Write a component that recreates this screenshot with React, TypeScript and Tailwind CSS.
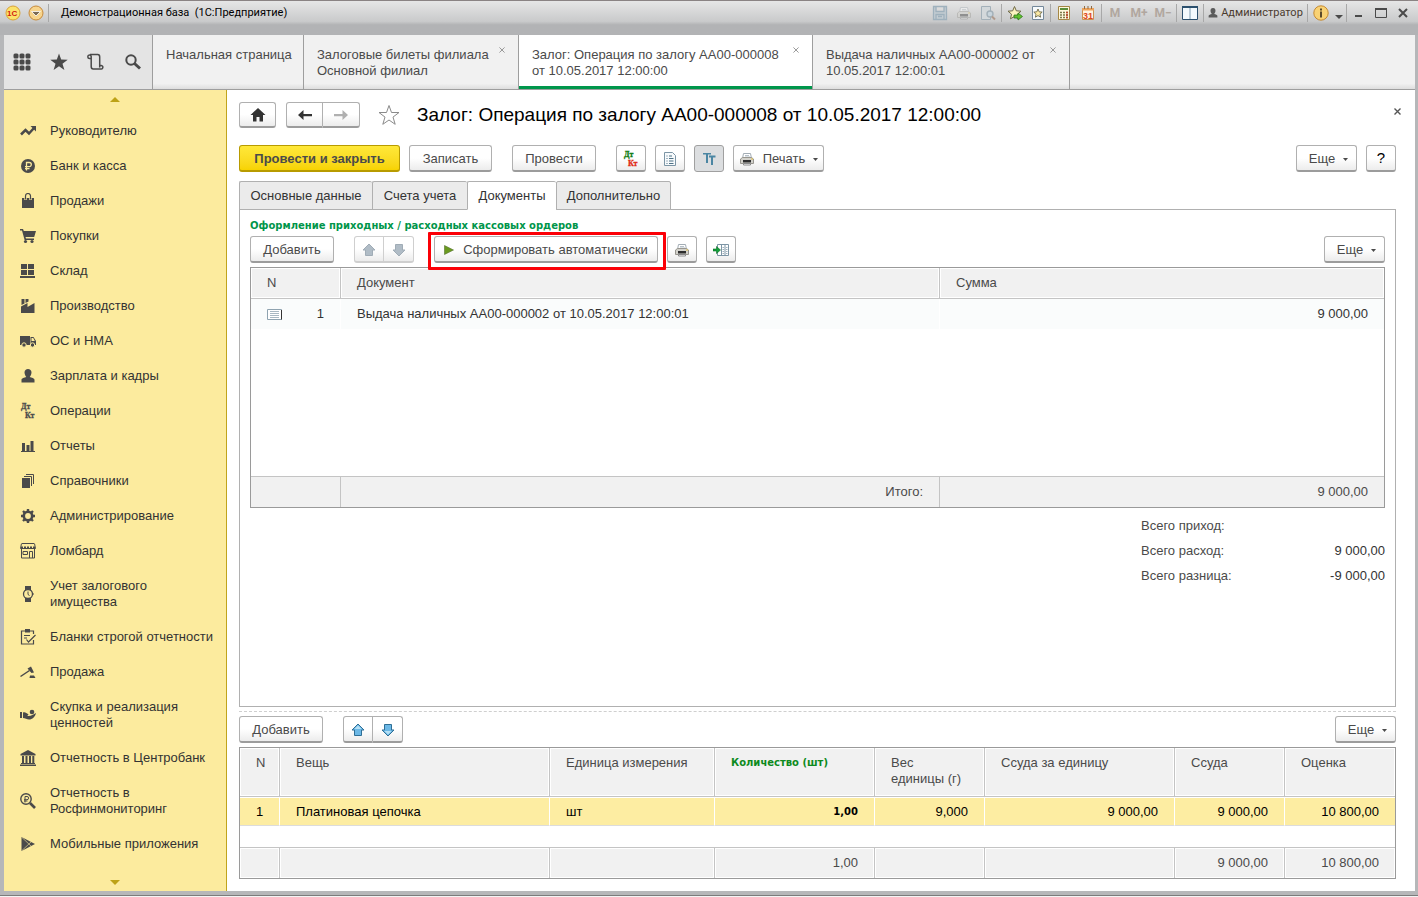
import type { ReactNode } from 'react'
import clsx from 'clsx'

/* ---------- icons ---------- */

function Svg({ children, size = 16, className }: { children: ReactNode; size?: number; className?: string }) {
  return (
    <svg width={size} height={size} viewBox={`0 0 ${size} ${size}`} fill="currentColor" className={clsx('shrink-0', className)} aria-hidden="true">
      {children}
    </svg>
  )
}

function DtKt({ top = '#4a4a4a', bottom = '#4a4a4a' }: { top?: string; bottom?: string }) {
  return (
    <Svg className="overflow-visible">
      <g fontFamily="'Liberation Serif', serif" fontWeight="bold" fontSize="8" strokeWidth=".3">
        <text x="1" y="6" fill={top} stroke={top}>Дт</text>
        <text x="5" y="15" fill={bottom} stroke={bottom}>Кт</text>
      </g>
    </Svg>
  )
}

function Printer({ muted }: { muted?: boolean }) {
  return (
    <Svg className={muted ? 'opacity-40' : ''}>
      <path d="M4.500 2.500h7l1 5h-9z" fill="#fff" stroke="#a3adb5" />
      <path d="M6 4.500h4M6 6h5" stroke="#b6c0c8" />
      <path d="M1.500 8l2-1.500h9l2 1.500v4.500h-13z" fill="#d2d1cb" stroke="#98968f" />
      <path d="M4 9h8v2.500H4z" fill="#2d2d2d" />
      <path d="M4.500 12.500h7v1.500h-7z" fill="#fff" stroke="#8a8a8a" />
      <path d="M12 8h2" stroke="#e6c34a" />
    </Svg>
  )
}

function BlueArrow({ down, muted }: { down?: boolean; muted?: boolean }) {
  return (
    <Svg className={down ? 'rotate-180' : ''}>
      <path
        d="M8 2L14 8H11.500V13.500H4.500V8H2z"
        fill={muted ? '#b0bcc6' : '#6cb8e6'}
        stroke={muted ? '#a0acb6' : '#2f6f96'}
        strokeLinejoin="round"
      />
      {!muted && <path d="M8 3.500l3.500 3.500H4.500z" fill="#b5e0f5" />}
    </Svg>
  )
}

function Caret() {
  return (
    <svg width="5" height="3" viewBox="0 0 5 3" className="mt-px shrink-0" fill="#4a4a4a" aria-hidden="true">
      <path d="M0 0h5L2.500 3z" />
    </svg>
  )
}

function Cross({ size = 7, weight = 1 }: { size?: number; weight?: number }) {
  return (
    <svg width={size} height={size} viewBox="0 0 7 7" stroke="currentColor" strokeWidth={weight} fill="none" aria-hidden="true">
      <path d="M.5.5l6 6M6.500.5l-6 6" />
    </svg>
  )
}

const sections: { label: string; icon: ReactNode }[] = [
  {
    label: 'Руководителю',
    icon: <Svg><path d="M1 11.500L5.500 7L9 10.500L14 5" fill="none" stroke="currentColor" strokeWidth="2.500" /><path d="M10.500 3H16v5.500z" /></Svg>,
  },
  {
    label: 'Банк и касса',
    icon: (
      <Svg>
        <circle cx="8" cy="8" r="7" />
        <path d="M6.500 12.500V4.500h2.700a2 2 0 0 1 0 4.200H5M5 10.700h4.500" fill="none" stroke="#fceb9e" strokeWidth="1.300" />
      </Svg>
    ),
  },
  {
    label: 'Продажи',
    icon: <Svg><path d="M2 5h12v10H2z" /><path d="M5.500 7V3.500a2.500 2.500 0 0 1 5 0V7" fill="none" stroke="#fceb9e" strokeWidth="2.400" /><path d="M5.500 6.500V3a2.500 2.500 0 0 1 5 0v3.500" fill="none" stroke="currentColor" strokeWidth="1.200" /></Svg>,
  },
  {
    label: 'Покупки',
    icon: <Svg><path d="M0 1h3l.8 2H16l-1.800 6H5.500l.5 1.500h8V12H4.600L2 2.500H0z" /><circle cx="5.500" cy="13.500" r="1.600" /><circle cx="12" cy="13.500" r="1.600" /></Svg>,
  },
  {
    label: 'Склад',
    icon: <Svg><path d="M1 1h6v5H1zM8 1h6v5H8zM1 7h6v5H1zM8 7h6v5H8zM0 13h15v2H0z" /></Svg>,
  },
  {
    label: 'Производство',
    icon: <Svg><path d="M1 15V8.500L7.500 5v4l7-4v10zM1.500 1h3v4.500L1.500 7zM5.500 1h3v2.500l-3 1.500z" /></Svg>,
  },
  {
    label: 'ОС и НМА',
    icon: <Svg><path d="M0 3h10v9H0zM10.500 4h3l2.500 4v4h-5.500z" /><path d="M11.500 5h1.700l1.600 3h-3.300z" fill="#fceb9e" /><g stroke="#fceb9e"><circle cx="4" cy="12" r="2.200" /><circle cx="12.500" cy="12" r="2.200" /></g></Svg>,
  },
  {
    label: 'Зарплата и кадры',
    icon: <Svg><path d="M8 1c2 0 3.500 1.200 3.500 3.500S10 8.500 9.700 9c2 .8 4.800 1 4.800 3v2.500h-13V12c0-2 2.800-2.200 4.800-3-.3-.5-1.800-2.200-1.800-4.500S6 1 8 1z" /></Svg>,
  },
  { label: 'Операции', icon: <DtKt /> },
  {
    label: 'Отчеты',
    icon: <Svg><path d="M1 13h14v1H1zM2 5h3v8H2zM6.500 7h3v6h-3zM10.500 3h3v10h-3z" /></Svg>,
  },
  {
    label: 'Справочники',
    icon: <Svg><path d="M2 5h8v10H2z" /><path d="M4 3.500h7.500V13M6 1.500h7.500V11" fill="none" stroke="currentColor" /></Svg>,
  },
  {
    label: 'Администрирование',
    icon: (
      <Svg>
        <circle cx="8" cy="8" r="4.200" fill="none" stroke="currentColor" strokeWidth="2.600" />
        <path d="M8 1v3M8 12v3M1 8h3M12 8h3M3 3l2 2M11 11l2 2M13 3l-2 2M5 11l-2 2" stroke="currentColor" strokeWidth="2.400" />
      </Svg>
    ),
  },
  {
    label: 'Ломбард',
    icon: (
      <Svg>
        <g fill="none" stroke="currentColor">
          <path d="M1.500 6v9h13V6M2 .5h12M1.500.5L.5 5.500h15l-1-5M9.500 15V8.500h3V15M3 8.500h4.500v3H3z" />
          <path d="M1 4.500h14" strokeDasharray="2 1" strokeWidth="2" />
        </g>
      </Svg>
    ),
  },
  {
    label: 'Учет залогового имущества',
    icon: (
      <Svg>
        <path d="M5 0h6v4H5zM5 12h6v4H5z" />
        <circle cx="8" cy="8" r="4.500" fill="#fceb9e" stroke="currentColor" strokeWidth="1.300" />
        <path d="M8 5.500V8.500l1.500 1M13 8h1" fill="none" stroke="currentColor" />
      </Svg>
    ),
  },
  {
    label: 'Бланки строгой отчетности',
    icon: (
      <Svg>
        <path d="M13.500 5V2h-12v13h12v-4M4 6.500h6M4 9h3M6.500 10.500l2 2.500L15.500 6" fill="none" stroke="currentColor" strokeWidth="1.200" />
        <path d="M5 0h5v3.500H5z" />
      </Svg>
    ),
  },
  {
    label: 'Продажа',
    icon: <Svg><path d="M.5 12.500L9.500 6.500" stroke="currentColor" strokeWidth="1.500" /><path d="M7.500 4.500L11 2.500l3 6-2.500.5zM10 11.500h4l1.500 2.500h-6z" /></Svg>,
  },
  {
    label: 'Скупка и реализация ценностей',
    icon: <Svg><path d="M0 5h2v6H0zM3 5.500c2-1 3.500.5 5 1.500 1 .8 0 1.500-1 1.500 2 1.500 6-.5 9-2.500-1 4-3.500 6.500-7 6.500-2 0-4-1.500-6-1.500z" /><circle cx="12" cy="5" r="2.300" /></Svg>,
  },
  {
    label: 'Отчетность в Центробанк',
    icon: <Svg><path d="M8 0l7.500 4v1.500H.5V4zM1 13h14v1H1zM0 14.500h16V16H0zM2 6h2v7H2zM5.500 6h2v7h-2zM9 6h2v7H9zM12.300 6h2v7h-2z" /></Svg>,
  },
  {
    label: 'Отчетность в Росфинмониторинг',
    icon: (
      <Svg>
        <g fill="none" stroke="currentColor">
          <circle cx="6" cy="6" r="5.200" strokeWidth="1.400" />
          <path d="M5 9.500v-6h2a1.500 1.500 0 0 1 0 3.200H4M4 8h3.500" />
          <path d="M10 10l5 5" strokeWidth="2.600" />
        </g>
      </Svg>
    ),
  },
  {
    label: 'Мобильные приложения',
    icon: <Svg><path d="M1.500 1L15 8 1.500 15z" /><path d="M2 1.500l9 8.500M2 14.500L11 6" stroke="#fceb9e" strokeWidth=".6" /></Svg>,
  },
]

/* ---------- controls ---------- */

interface ButtonProps {
  children: ReactNode
  className?: string
  label?: string
  disabled?: boolean
}

function Button({ children, className, label, disabled }: ButtonProps) {
  return (
    <button
      type="button"
      aria-label={label}
      disabled={disabled}
      className={clsx(
        'flex shrink-0 items-center justify-center rounded-[3px] border border-b-2 bg-linear-to-b from-white from-50% to-[#ececec] pt-px',
        disabled ? 'border-[#cfcfcf]' : 'border-[#b0b0b0] border-b-[#9c9c9c]',
        className ?? 'h-[27px] w-[30px]'
      )}
    >
      {children}
    </button>
  )
}

function MoreButton() {
  return (
    <Button className="h-[27px] w-[61px] gap-2 pl-1">
      Еще <Caret />
    </Button>
  )
}

function ArrowPair({ muted }: { muted?: boolean }) {
  return (
    <div className="flex">
      <Button className="h-[27px] w-[30px] rounded-r-none" label="Переместить вверх" disabled={muted}>
        <BlueArrow muted={muted} />
      </Button>
      <Button className="h-[27px] w-[30px] rounded-l-none border-l-0" label="Переместить вниз" disabled={muted}>
        <BlueArrow down muted={muted} />
      </Button>
    </div>
  )
}

/* ---------- window title ---------- */

function Divider() {
  return <span className="mx-px mt-[3px] h-[18px] w-px shrink-0 bg-[#a8a8a8]" />
}

function BarButton({ label, className = 'w-6', children }: { label: string; className?: string; children: ReactNode }) {
  return (
    <button type="button" aria-label={label} className={clsx('flex h-6 shrink-0 items-center justify-center', className)}>
      {children}
    </button>
  )
}

function TitleBar() {
  return (
    <header className="flex h-[35px] shrink-0 items-start border-t border-[#8a8383] bg-linear-to-b from-[#e6e6e6] via-[#c9cacb] via-60% to-[#b2b3b5] to-70% pr-1 pl-px font-['Roboto','Noto_Sans',sans-serif] text-[11px] text-black">
      <BarButton label="1С:Предприятие">
        <Svg>
          <circle cx="8" cy="8" r="7" fill="#fbe36a" stroke="#d9a23a" />
          <text x="2" y="11" fontSize="8" fontWeight="bold" fill="#d2200f" fontFamily="'Liberation Sans', sans-serif">1С</text>
        </Svg>
      </BarButton>
      <BarButton label="Главное меню" className="w-[22px]">
        <Svg>
          <circle cx="8" cy="8" r="7" fill="#f7d48c" stroke="#c68a3c" />
          <path d="M3.500 6.500h9L8 11z" fill="#7b6a54" stroke="#fff" strokeWidth=".8" />
        </Svg>
      </BarButton>
      <Divider />
      <h1 className="pl-[11px] leading-6 whitespace-pre">Демонстрационная база  (1С:Предприятие)</h1>
      <div className="ml-auto flex text-[#b1a79f]">
        <BarButton label="Сохранить">
          <Svg className="text-[#9fb1bd]"><path d="M1.500 1.500h13v13h-13zM4 1.500v5h8v-5M4 14V9.500h8V14M6 11.500h4" fill="#c3ccd2" stroke="currentColor" strokeWidth="1.300" /></Svg>
        </BarButton>
        <BarButton label="Печать"><Printer muted /></BarButton>
        <BarButton label="Просмотр">
          <Svg className="text-[#a3b0b9]">
            <path d="M1.500 1.500h9v13h-9z" fill="#d3d8db" stroke="currentColor" />
            <circle cx="10" cy="9" r="3" fill="#c8d4dc" stroke="currentColor" strokeWidth="1.400" />
            <path d="M12 11.500l3 3" stroke="#b09a8c" strokeWidth="2" />
          </Svg>
        </BarButton>
        <Divider />
        <BarButton label="Добавить в избранное">
          <Svg>
            <path d="M7.500 1.500l1.800 4.300 4.700.4-3.500 3 1 4.600-4-2.400-4 2.400 1-4.600-3.500-3 4.700-.4z" fill="#fdf3c0" stroke="#6f6a48" />
            <path d="M7 10h4V8l4.500 3.500L11 15v-2H7z" fill="#62c12f" stroke="#2d7a1c" strokeWidth=".8" />
          </Svg>
        </BarButton>
        <BarButton label="Избранное" className="w-[22px]">
          <Svg>
            <path d="M2.500 1.500h11v13h-11z" fill="#f7fafc" stroke="#74889a" />
            <path d="M8 4l1.200 2.800 3 .3L10 9.200l.6 3L8 10.600l-2.600 1.600.6-3-2.200-2.100 3-.3z" fill="#fbe9a4" stroke="#5d5a3c" strokeWidth=".8" />
          </Svg>
        </BarButton>
        <Divider />
        <BarButton label="Калькулятор">
          <Svg>
            <path d="M2.500 1.500h11v13h-11z" fill="#fff8dc" stroke="#a58745" />
            <path d="M4 3h8v2H4z" fill="#5a8f3a" />
            <path d="M4 7.500h8M4 10h8M4 12.500h8" stroke="#7d7a4a" strokeWidth="1.400" strokeDasharray="2 1" />
            <path d="M10 7.500h2M10 10h2M10 12.500h2" stroke="#c0452c" strokeWidth="1.400" />
          </Svg>
        </BarButton>
        <BarButton label="Календарь">
          <Svg>
            <path d="M2.500 3.500h11v11h-11z" fill="#fff4df" stroke="#c99355" />
            <path d="M2 3h12v2.500H2z" fill="#eea35a" />
            <path d="M4.500 1v3M8 1v3M11.500 1v3" stroke="#8f6b45" />
            <text x="3" y="13.500" fontSize="9" fontWeight="bold" fill="#e0481c" fontFamily="'Liberation Sans', sans-serif">31</text>
          </Svg>
        </BarButton>
        <Divider />
        <BarButton label="Поместить в память"><b className="text-xs">M</b></BarButton>
        <BarButton label="Прибавить к памяти"><b className="text-xs">M+</b></BarButton>
        <BarButton label="Вычесть из памяти"><b className="text-xs">M−</b></BarButton>
        <Divider />
        <BarButton label="Разделить окно">
          <Svg><path d="M.5 1.500h15v13H.5z" fill="#f3f9fd" stroke="#2c506e" /><path d="M0 1h16v2H0z" fill="#2c506e" /><path d="M8 3v11" stroke="#7f9bb0" /></Svg>
        </BarButton>
        <Divider />
        <button type="button" className="flex h-6 w-[101px] shrink-0 items-center justify-center gap-[3px] text-[#4a3a2e]">
          <svg width="10" height="10" viewBox="0 0 16 16" fill="#5b5b5b" className="shrink-0" aria-hidden="true">
            <path d="M8 0c3 0 4 2 4 4.500S10.500 8.500 10 9.500c2 .8 5 1 5 3V15H1v-2.500c0-2 3-2.200 5-3-.5-1-2-2.500-2-5S5 0 8 0z" />
          </svg>
          Администратор
        </button>
        <Divider />
        <BarButton label="О программе">
          <Svg>
            <circle cx="8" cy="8" r="7.200" fill="#f9d274" stroke="#c58a32" />
            <path d="M7 3.500h2v2H7zM7 6.500h2v6H7z" fill="#5b4a2a" />
          </Svg>
        </BarButton>
        <BarButton label="Ещё" className="w-3 pt-2">
          <svg width="8" height="4" viewBox="0 0 8 4" fill="#4a4a4a" aria-hidden="true"><path d="M0 0h8L4 4z" /></svg>
        </BarButton>
        <Divider />
        <BarButton label="Свернуть" className="w-[22px]"><Svg size={12}><path d="M2 8h7v2H2z" fill="#4a4a4a" /></Svg></BarButton>
        <BarButton label="Развернуть" className="w-[22px]"><Svg size={12}><path d="M.5 1.500h11v9H.5z" fill="none" stroke="#4a4a4a" /><path d="M0 1h12v2H0z" fill="#4a4a4a" /></Svg></BarButton>
        <BarButton label="Закрыть окно" className="w-[22px]"><Svg size={12}><path d="M2 2l8 8M10 2l-8 8" stroke="#4a4a4a" strokeWidth="2" /></Svg></BarButton>
      </div>
    </header>
  )
}

/* ---------- open windows ---------- */

const windows = [
  { label: 'Начальная страница', width: 'w-[151px]', fixed: true },
  { label: 'Залоговые билеты филиала Основной филиал', width: 'w-[215px]' },
  { label: 'Залог: Операция по залогу AA00-000008 от 10.05.2017 12:00:00', width: 'w-[294px]', active: true },
  { label: 'Выдача наличных AA00-000002 от 10.05.2017 12:00:01', width: 'w-[257px]' },
]

function WindowTabs() {
  return (
    <div className="flex h-[55px] shrink-0 border-b border-[#9e9e9e] bg-[#f1f1f1] text-[#4a4a4a]">
      <div className="flex w-[148px] shrink-0 items-center justify-between bg-[#e4e4e4] pr-[10px] pl-[9px]">
        <button type="button" aria-label="Разделы">
          <Svg size={18}>
            {[3, 9, 15].map((y) => [3, 9, 15].map((x) => <rect key={`${x}-${y}`} x={x - 2.5} y={y - 2.5} width="5" height="5" rx="1.500" />))}
          </Svg>
        </button>
        <button type="button" aria-label="Избранное">
          <Svg size={18}><path d="M9 .5l2.200 6.100 6.500.2-5.200 3.900 1.900 6.200L9 13.200l-5.400 3.700 1.900-6.200L.3 6.800l6.500-.2z" /></Svg>
        </button>
        <button type="button" aria-label="История">
          <Svg size={18}><path d="M4.500 5.500h-2a1.700 1.700 0 1 1 1.700-2V13.500c0 2 1 2.500 2 2.500h8a1.800 1.800 0 1 0-1.500-3V4c0-1.500-.8-2.500-2-2.500H3M12.700 13v1.500" fill="none" stroke="currentColor" strokeWidth="1.500" /></Svg>
        </button>
        <button type="button" aria-label="Поиск">
          <Svg size={18}><circle cx="7" cy="7" r="4.700" fill="none" stroke="currentColor" strokeWidth="2" /><path d="M10.500 10.500l5.500 5" stroke="currentColor" strokeWidth="3" /></Svg>
        </button>
      </div>
      {windows.map((w) => (
        <div
          key={w.label}
          className={clsx(
            'flex shrink-0 items-start border-l border-[#9e9e9e] pt-3 pl-[13px]',
            w.width,
            w.active ? 'bg-white shadow-[inset_0_-3px_0_#00964b]' : 'bg-linear-to-b from-[#f1f1f1] from-90% to-[#dedede]'
          )}
        >
          <a href="#" className="flex-1 leading-4">{w.label}</a>
          {!w.fixed && (
            <button type="button" aria-label="Закрыть" className="mr-3 w-[7px] shrink-0 text-[#8a8a8a]">
              <Cross size={6} />
            </button>
          )}
        </div>
      ))}
      <div className="flex-1 border-l border-[#9e9e9e] bg-linear-to-b from-[#f1f1f1] from-90% to-[#dedede]" />
    </div>
  )
}

function Sidebar() {
  return (
    <aside className="flex w-[223px] shrink-0 flex-col border-r border-[#c0a41c] bg-[#fceb9e]">
      <button type="button" aria-label="Прокрутить вверх" className="flex h-[18px] items-center justify-center text-[#bda216]">
        <svg width="10" height="5" viewBox="0 0 10 5" fill="currentColor" aria-hidden="true"><path d="M0 5h10L5 0z" /></svg>
      </button>
      <nav className="flex flex-col gap-[19px] pt-[15px] pr-3 pl-4">
        {sections.map((s) => (
          <a key={s.label} href="#" className="flex items-center gap-[14px] leading-4 text-[#333]">
            <span className="text-[#4a4a4a]">{s.icon}</span>
            <span>{s.label}</span>
          </a>
        ))}
      </nav>
      <button type="button" aria-label="Прокрутить вниз" className="mt-auto flex h-[18px] items-center justify-center text-[#bda216]">
        <svg width="10" height="5" viewBox="0 0 10 5" fill="currentColor" aria-hidden="true"><path d="M0 0h10L5 5z" /></svg>
      </button>
    </aside>
  )
}

/* ---------- form ---------- */

function FormHeader() {
  return (
    <div className="flex items-start">
      <Button className="h-[26px] w-[37px]" label="Домой">
        <Svg className="text-[#333]"><path d="M8 1l7.500 7H13v6.500H9.500V10h-3v4.500H3V8H.5z" /></Svg>
      </Button>
      <div className="ml-[10px] flex">
        <Button className="h-[26px] w-[37px] rounded-r-none" label="Назад">
          <Svg className="text-[#333]"><path d="M1 8l5.500-5v4H15v2.200H6.500V13z" /></Svg>
        </Button>
        <Button className="h-[26px] w-[37px] rounded-l-none border-l-0" label="Вперед">
          <Svg className="text-[#b0b0b0]"><path d="M15 8L9.500 3v4H1v2.200h8.500V13z" /></Svg>
        </Button>
      </div>
      <button type="button" aria-label="В избранное" className="ml-[18px] pt-[2px] text-[#8a8a8a]">
        <Svg size={22}><path d="M11 1.500l2.500 7h7.500l-6 4.600 2.200 7.200L11 16l-6.200 4.300L7 13.100 1 8.500h7.500z" fill="#fff" stroke="currentColor" /></Svg>
      </button>
      <h2 className="ml-[17px] text-[19px] leading-[26px] text-black">Залог: Операция по залогу AA00-000008 от 10.05.2017 12:00:00</h2>
      <button type="button" aria-label="Закрыть" className="mt-[6px] -mr-[5px] ml-auto text-[#555]">
        <Cross weight={1.4} />
      </button>
    </div>
  )
}

function CommandBar() {
  return (
    <div className="mt-[17px] flex">
      <button
        type="button"
        className="h-[27px] w-[161px] rounded-[3px] border border-b-2 border-[#b89b00] bg-linear-to-b from-[#ffe838] to-[#f7d300] pt-px font-bold text-[#4a4a4a]"
      >
        Провести и закрыть
      </button>
      <Button className="ml-[9px] h-[27px] w-[83px]">Записать</Button>
      <Button className="ml-5 h-[27px] w-[84px]">Провести</Button>
      <div className="ml-5 flex gap-[9px]">
        <Button label="Проводки"><DtKt top="#0d7a0d" bottom="#e02a12" /></Button>
        <Button label="Структура подчиненности">
          <Svg>
            <path d="M2.500 1.500h8l3 3v10h-11z" fill="#f7fafc" stroke="#7c95a5" />
            <path d="M4.500 5h1M4.500 7.500h1M4.500 10h1M4.500 12.500h1M7 5h3M7 7.500h4.500M7 10h4.500M7 12.500h4.500" stroke="#4f7286" />
          </Svg>
        </Button>
        <button type="button" aria-label="Учетные данные" aria-pressed="true" className="flex h-[27px] w-[30px] items-center justify-center rounded-[3px] border border-[#a0a0a0] bg-[#dcdee0]">
          <Svg className="text-[#4b86a3]"><path d="M2 2h8v1.500H7V12H5V3.500H2zM8 4.500h6.500v2H12V14h-2V6.500H8z" /></Svg>
        </button>
        <Button className="h-[27px] w-[91px] gap-2">
          <Printer />
          <span>Печать</span>
          <Caret />
        </Button>
      </div>
      <div className="ml-auto flex gap-[9px]">
        <MoreButton />
        <Button className="h-[27px] w-[30px] text-[15px] text-black" label="Справка">?</Button>
      </div>
    </div>
  )
}

const tabs = [
  { label: 'Основные данные', width: 'w-[133px]' },
  { label: 'Счета учета', width: 'w-[95px]' },
  { label: 'Документы', width: 'w-[89px]', active: true },
  { label: 'Дополнительно', width: 'w-[115px]' },
]

function FormTabs() {
  return (
    <div role="tablist" className="relative -mb-px mt-[9px] flex">
      {tabs.map((t, i) => (
        <button
          key={t.label}
          type="button"
          role="tab"
          aria-selected={!!t.active}
          className={clsx(
            'h-[29px] shrink-0 rounded-t-[2px] border border-[#b0b0b0] text-[#333]',
            t.width,
            i < tabs.length - 1 && 'border-r-0',
            t.active ? 'border-b-white bg-white' : 'bg-[#ebebeb]'
          )}
        >
          {t.label}
        </button>
      ))}
    </div>
  )
}

function DocumentsTable() {
  const head = 'h-[31px] border-b border-[#c4c4c4] bg-[#f1f1f1] px-4 text-left font-normal shadow-[inset_0_0_0_1px_#fff]'
  const foot = 'h-[31px] border-t border-[#c4c4c4] bg-[#f1f1f1] px-4 text-right'
  return (
    <table className="mt-1 w-full table-fixed border-separate border-spacing-0 border border-[#9a9a9a] text-[#4a4a4a]">
      <colgroup>
        <col className="w-[89px]" />
        <col />
        <col className="w-[445px]" />
      </colgroup>
      <thead>
        <tr>
          <th className={head}>N</th>
          <th className={clsx(head, 'border-l')}>Документ</th>
          <th className={clsx(head, 'border-l')}>Сумма</th>
        </tr>
      </thead>
      <tbody>
        <tr className="bg-[#fafcfc] text-[#333]">
          <td className="h-[30px] px-4">
            <div className="flex items-center justify-between">
              <svg width="16" height="11" viewBox="0 0 16 11" aria-hidden="true">
                <path d="M.5.5h14v10H.5z" fill="#fff" stroke="#8fa3b0" />
                <path d="M3 2.500h9M3 4.500h9M3 6.500h9M3 8.500h9" stroke="#a9b8c2" />
                <path d="M14.500 1v9.500" stroke="#333" />
              </svg>
              1
            </div>
          </td>
          <td className="border-l border-white px-4">Выдача наличных AA00-000002 от 10.05.2017 12:00:01</td>
          <td className="border-l border-white px-4 text-right">9 000,00</td>
        </tr>
        <tr>
          <td colSpan={3} className="h-[147px]" />
        </tr>
      </tbody>
      <tfoot>
        <tr>
          <td className={foot} />
          <td className={clsx(foot, 'border-l')}>Итого:</td>
          <td className={clsx(foot, 'border-l')}>9 000,00</td>
        </tr>
      </tfoot>
    </table>
  )
}

const totals = [
  ['Всего приход:', ''],
  ['Всего расход:', '9 000,00'],
  ['Всего разница:', '-9 000,00'],
]

function DocumentsPanel() {
  return (
    <section className="flex-1 border border-[#b0b0b0] px-[10px] pt-2">
      <h3 className="font-['DejaVu_Sans',sans-serif] text-[10px] leading-4 font-bold text-[#00954a]">
        Оформление приходных / расходных кассовых ордеров
      </h3>
      <div className="mt-[2px] flex">
        <Button className="h-[27px] w-[84px]">Добавить</Button>
        <div className="ml-5">
          <ArrowPair muted />
        </div>
        <div className="relative ml-5">
          <Button className="h-[27px] w-[224px] gap-[9px]">
            <svg width="10" height="10" viewBox="0 0 10 10" aria-hidden="true"><path d="M.5.5L9.500 5 .5 9.500z" fill="#6a9a1f" stroke="#55722f" strokeWidth=".6" /></svg>
            Сформировать автоматически
          </Button>
          <span className="pointer-events-none absolute -inset-x-2 -top-1 -bottom-[7px] ml-[2px] rounded-[1px] border-[3px] border-[#fb0007]" />
        </div>
        <div className="ml-[9px] flex gap-[9px]">
          <Button label="Печать"><Printer /></Button>
          <Button label="Вывести список">
            <Svg>
              <path d="M4.500 2.500h11v11h-11zM8.500 2.500v11M12 2.500v11" fill="#fff" stroke="#7c95a5" />
              <path d="M9.500 5.500h1.500M9.500 7.500h1.500M9.500 9.500h1.500M9.500 11.500h1.500M13 5.500h1.500M13 7.500h1.500M13 9.500h1.500M13 11.500h1.500" stroke="#9fb1bd" />
              <path d="M0 7h3.500V4.500L7.500 8l-4 3.500V9H0z" fill="#12a03a" stroke="#0b6b25" strokeWidth=".6" />
            </Svg>
          </Button>
        </div>
        <div className="ml-auto">
          <MoreButton />
        </div>
      </div>
      <DocumentsTable />
      <dl className="mt-[5px] ml-auto grid w-[244px] grid-cols-2 leading-[25px] text-[#4a4a4a]">
        {totals.map(([name, value]) => (
          <div key={name} className="contents">
            <dt>{name}</dt>
            <dd className="text-right text-[#333]">{value}</dd>
          </div>
        ))}
      </dl>
    </section>
  )
}

const columns = [
  { title: 'N', width: 'w-[39px]', value: '1', total: '' },
  { title: 'Вещь', width: '', value: 'Платиновая цепочка', total: '' },
  { title: 'Единица измерения', width: 'w-[165px]', value: 'шт', total: '' },
  { title: 'Количество (шт)', width: 'w-[160px]', value: '1,00', total: '1,00', numeric: true, required: true },
  { title: 'Вес единицы (г)', width: 'w-[110px]', value: '9,000', total: '', numeric: true },
  { title: 'Ссуда за единицу', width: 'w-[190px]', value: '9 000,00', total: '', numeric: true },
  { title: 'Ссуда', width: 'w-[110px]', value: '9 000,00', total: '9 000,00', numeric: true },
  { title: 'Оценка', width: 'w-[111px]', value: '10 800,00', total: '10 800,00', numeric: true },
]

function ItemsTable() {
  return (
    <table className="mt-1 w-full table-fixed border-separate border-spacing-0 border border-[#9a9a9a] text-[#4a4a4a]">
      <colgroup>
        {columns.map((c) => <col key={c.title} className={c.width} />)}
      </colgroup>
      <thead>
        <tr>
          {columns.map((c, i) => (
            <th
              key={c.title}
              className={clsx(
                'h-[49px] border-b border-[#c4c4c4] bg-[#f1f1f1] px-4 pt-[7px] text-left align-top leading-4 shadow-[inset_0_0_0_1px_#fff]',
                i > 0 && 'border-l',
                c.required ? "font-['DejaVu_Sans',sans-serif] text-[10px] font-bold text-[#0d8a20]" : 'font-normal'
              )}
            >
              {c.title}
            </th>
          ))}
        </tr>
      </thead>
      <tbody>
        <tr className="bg-[#fdeda2] text-black">
          {columns.map((c, i) => (
            <td
              key={c.title}
              className={clsx(
                'h-[29px] border-y border-t-white border-b-[#dcdcdc] px-4',
                i > 0 && 'border-l border-l-white',
                c.numeric && 'text-right',
                c.required && "font-['DejaVu_Sans',sans-serif] text-[10px] font-bold"
              )}
            >
              {c.value}
            </td>
          ))}
        </tr>
        <tr>
          <td colSpan={8} className="h-[22px] border-b border-[#c4c4c4]" />
        </tr>
      </tbody>
      <tfoot>
        <tr>
          {columns.map((c, i) => (
            <td key={c.title} className={clsx('h-[30px] bg-[#f1f1f1] px-4 text-right shadow-[inset_0_0_0_1px_#fff]', i > 0 && 'border-l border-[#c4c4c4]')}>
              {c.total}
            </td>
          ))}
        </tr>
      </tfoot>
    </table>
  )
}

export default function App() {
  return (
    <div className="flex min-h-screen flex-col bg-[#b6b7b9] font-['Liberation_Sans',Arial,sans-serif] text-[13px]">
      <TitleBar />
      <div className="mr-[3px] ml-1 flex flex-1 flex-col">
        <WindowTabs />
        <div className="flex flex-1">
          <Sidebar />
          <main className="flex min-w-0 flex-1 flex-col bg-white pt-3 pr-[19px] pb-3 pl-3 text-[#4a4a4a]">
            <FormHeader />
            <CommandBar />
            <FormTabs />
            <DocumentsPanel />
            <div className="mt-1 border-t border-dashed border-[#cfcfcf]" />
            <div className="mt-1 flex">
              <Button className="h-[27px] w-[84px]">Добавить</Button>
              <div className="ml-5">
                <ArrowPair />
              </div>
              <div className="ml-auto">
                <MoreButton />
              </div>
            </div>
            <ItemsTable />
          </main>
        </div>
      </div>
      <div className="h-[5px] shrink-0 border-b border-[#7c7c7c]" />
      <div className="h-px shrink-0 bg-[#f4f4f4]" />
    </div>
  )
}
